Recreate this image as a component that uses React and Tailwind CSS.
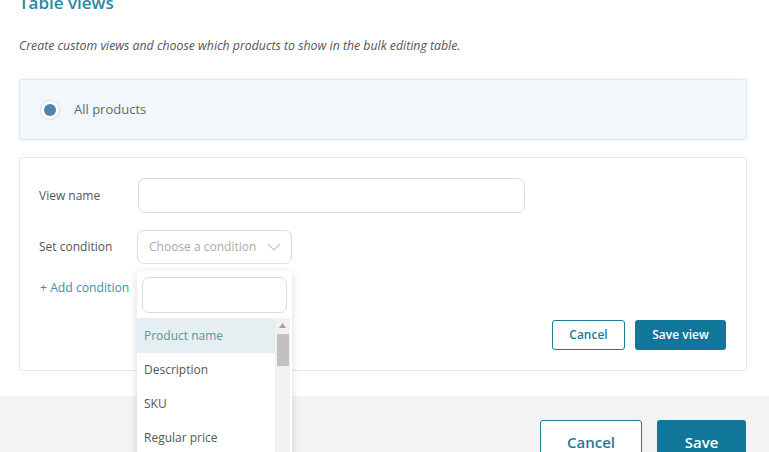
import React from "react";

function Chevron() {
  return (
    <svg width="14" height="8" viewBox="0 0 14 8" fill="none" className="shrink-0">
      <path d="M1 1l6 6 6-6" stroke="#c9c9c9" strokeWidth="1.2" />
    </svg>
  );
}

export default function App() {
  const options = ["Product name", "Description", "SKU", "Regular price"];
  return (
    <div
      className="relative w-full h-[452px] overflow-hidden bg-white text-[#555]"
      style={{ fontFamily: '"Open Sans", "Noto Sans", sans-serif' }}
    >
      <div className="pl-[19px] pr-[22px]">
        <h1 className="mt-[-8px] text-[17px] leading-[22px] font-semibold text-[#2a87a4]">Table views</h1>
        <p className="mt-[24px] text-[12.3px] italic leading-[16px] text-[#555]">
          Create custom views and choose which products to show in the bulk editing table.
        </p>
        <div className="mt-[25px] h-[61px] rounded-[3px] border border-[#dde9ef] bg-[#f1f7fa] shadow-[0_0_4px_rgba(180,210,225,0.35)] flex items-center pl-[20px]">
          <span className="w-[20px] h-[20px] rounded-full bg-white border border-[#e3e3e3] flex items-center justify-center shadow-[0_0_2px_rgba(0,0,0,0.08)]">
            <span className="w-[12px] h-[12px] rounded-full bg-[#4a86a5]" />
          </span>
          <span className="ml-[14px] text-[13px] text-[#666]">All products</span>
        </div>
        <div className="mt-[17px] h-[214px] rounded-[3px] border border-[#e8e8e8] bg-white pt-[20px] pl-[19px] pr-[20px] flex flex-col">
          <div className="flex items-center">
            <span className="w-[99px] text-[12px] text-[#555]">View name</span>
            <div className="w-[387px] h-[35px] rounded-[7px] border border-[#dcdcdc] bg-white" />
          </div>
          <div className="mt-[17px] flex items-center">
            <span className="w-[98px] text-[12px] text-[#555]">Set condition</span>
            <div className="w-[155px] h-[34px] rounded-[7px] border border-[#dcdcdc] bg-white flex items-center justify-between pl-[11px] pr-[10px]">
              <span className="text-[12px] text-[#aaa]">Choose a condition</span>
              <Chevron />
            </div>
          </div>
          <div className="mt-[14px] text-[12.2px] leading-[20px] text-[#3b8fae] pl-[1px]">+ Add condition</div>
          <div className="mt-[22px] flex justify-end gap-[10px]">
            <button className="w-[73px] h-[30px] rounded-[3px] border border-[#1b7b9a] bg-white text-[12px] font-semibold text-[#1b7b9a]">
              Cancel
            </button>
            <button className="w-[91px] h-[30px] rounded-[3px] bg-[#10779a] text-[12px] font-semibold text-white">
              Save view
            </button>
          </div>
        </div>
      </div>
      <div className="mt-[25px] h-[80px] bg-[#f3f3f3] flex justify-end pt-[24px] pr-[23px] gap-[15px]">
        <button className="w-[102px] h-[44px] rounded-[3px] border border-[#1b7b9a] bg-white text-[15px] font-semibold text-[#1b7b9a]">
          Cancel
        </button>
        <button className="w-[89px] h-[44px] rounded-[3px] bg-[#10779a] text-[15px] font-semibold text-white">
          Save
        </button>
      </div>

      <div className="absolute left-[137px] top-[271px] w-[155px] h-[200px] bg-white rounded-t-[4px] shadow-[0_2px_8px_rgba(0,0,0,0.15)] flex flex-col">
        <div className="px-[5px] pt-[6px]">
          <div className="h-[36px] rounded-[7px] border border-[#dcdcdc] bg-white" />
        </div>
        <div className="mt-[5px] flex">
          <div className="flex-1 flex flex-col">
            {options.map((o, i) => (
              <div
                key={o}
                className={
                  i === 0
                    ? "h-[35px] flex items-center pl-[7px] text-[12px] bg-[#e5eff1] text-[#5b92a6] rounded-tr-[4px]"
                    : "h-[34px] flex items-center pl-[7px] text-[12px] text-[#555]"
                }
              >
                {o}
              </div>
            ))}
          </div>
          <div className="w-[15px] bg-[#f1f1f1] flex flex-col items-center mr-[2px]">
            <svg width="7" height="5" viewBox="0 0 7 5" className="mt-[5px]">
              <path d="M3.5 0L7 5H0z" fill="#a3a3a3" />
            </svg>
            <div className="mt-[6px] w-[12px] h-[32px] bg-[#c1c1c1]" />
          </div>
        </div>
      </div>
    </div>
  );
}
